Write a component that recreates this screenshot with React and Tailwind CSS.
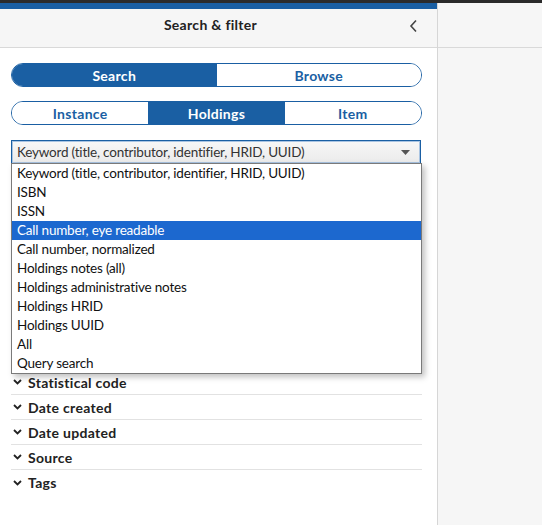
import React from "react";

const searchOptions = [
  "Keyword (title, contributor, identifier, HRID, UUID)",
  "ISBN",
  "ISSN",
  "Call number, eye readable",
  "Call number, normalized",
  "Holdings notes (all)",
  "Holdings administrative notes",
  "Holdings HRID",
  "Holdings UUID",
  "All",
  "Query search",
];

const filterGroups = ["Statistical code", "Date created", "Date updated", "Source", "Tags"];

function ChevronDown() {
  return (
    <svg width="9" height="6" viewBox="0 0 9 6" className="shrink-0">
      <path d="M1 1 L4.5 4.5 L8 1" fill="none" stroke="#222" strokeWidth="1.8" />
    </svg>
  );
}

function FilterRow({ label, last }) {
  return (
    <div
      className={
        "h-[25px] flex items-center gap-[6px] pl-[2px] " +
        (last ? "" : "border-b border-[#e2e2e2]")
      }
    >
      <ChevronDown />
      <span className="text-[14px] font-bold text-[#222] tracking-[0.3px]">{label}</span>
    </div>
  );
}

export default function App() {
  const selected = 3;
  return (
    <div className="w-[542px] h-[525px] bg-[#2b2b2b] pt-[3px] flex overflow-hidden font-['Lato',sans-serif]">
      {/* filter pane */}
      <div className="w-[437px] h-full bg-white flex flex-col relative">
        <div className="h-[6px] bg-[#1a5fa3]" />
        <div className="h-[39px] bg-[#f6f6f6] border-b border-[#d9d9d9] flex items-start justify-center pt-[6px] pr-[16px] relative">
          <span className="text-[14px] leading-[20px] font-bold text-[#222] tracking-[0.3px]">
            Search &amp; filter
          </span>
          <svg
            width="9"
            height="14"
            viewBox="0 0 9 14"
            className="absolute right-[19px] top-[10px]"
          >
            <path d="M7 1.5 L2 7 L7 12.5" fill="none" stroke="#444" strokeWidth="1.6" />
          </svg>
        </div>

        <div className="pl-[11px] pt-[15px] w-[422px] flex flex-col">
          {/* search / browse */}
          <div className="h-[24px] w-[411px] flex rounded-full border border-[#1a5fa3] overflow-hidden">
            <div className="flex-1 bg-[#1a5fa3] text-white font-bold text-[14px] flex items-center justify-center tracking-[0.3px]">
              Search
            </div>
            <div className="flex-1 bg-white text-[#1a5fa3] font-bold text-[14px] flex items-center justify-center tracking-[0.3px]">
              Browse
            </div>
          </div>

          {/* record type */}
          <div className="mt-[14px] h-[24px] w-[411px] flex rounded-full border border-[#1a5fa3] overflow-hidden">
            <div className="flex-1 bg-white text-[#1a5fa3] font-bold text-[14px] flex items-center justify-center tracking-[0.3px]">
              Instance
            </div>
            <div className="flex-1 bg-[#1a5fa3] text-white font-bold text-[14px] flex items-center justify-center tracking-[0.3px]">
              Holdings
            </div>
            <div className="flex-1 bg-white text-[#1a5fa3] font-bold text-[14px] flex items-center justify-center tracking-[0.3px]">
              Item
            </div>
          </div>

          {/* search option select */}
          <div className="mt-[15px] h-[24px] w-[410px] border border-[#1a5fa3] bg-gradient-to-b from-[#f7f7f7] to-[#ebebeb] shadow-[inset_0_0_0_1px_#a9c4e2] flex items-center pl-[5px] pr-[10px]">
            <span className="flex-1 text-[13.5px] tracking-[-0.2px] text-[#333]">{searchOptions[0]}</span>
            <svg width="9" height="5" viewBox="0 0 9 5">
              <path d="M0 0 H9 L4.5 5 Z" fill="#555" />
            </svg>
          </div>

          {/* query box and actions sitting under the open list */}
          <div className="mt-[8px] h-[54px] w-[410px] border border-[#bbb] rounded-[3px] bg-white" />
          <div className="mt-[8px] h-[30px] w-[410px] rounded-[3px] bg-[#e5e5e5]" />
          <div className="mt-[6px] w-[411px] flex flex-col">
            <div className="h-[25px] border-b border-[#e2e2e2]" />
            <div className="h-[25px] border-b border-[#e2e2e2]" />
            <div className="h-[25px] border-b border-[#e2e2e2]" />
            <div className="h-[25px] border-b border-[#e2e2e2]" />
            {filterGroups.map((g, i) => (
              <FilterRow key={g} label={g} last={i === filterGroups.length - 1} />
            ))}
          </div>
        </div>

        {/* open option list */}
        <div className="absolute left-[11px] top-[160px] w-[411px] bg-white border border-[#7a7a7a] shadow-[3px_3px_6px_rgba(0,0,0,0.25)] flex flex-col">
          {searchOptions.map((o, i) => (
            <div
              key={o}
              className={
                "h-[19px] pl-[5px] flex items-center text-[13.5px] tracking-[-0.2px] " +
                (i === selected ? "bg-[#1c68cf] text-white" : "text-[#111]")
              }
            >
              {o}
            </div>
          ))}
        </div>
      </div>

      {/* results pane */}
      <div className="flex-1 h-full bg-[#f6f6f6] border-l border-[#d6d6d6] flex flex-col">
        <div className="h-[45px] border-b border-[#d9d9d9]" />
      </div>
    </div>
  );
}
